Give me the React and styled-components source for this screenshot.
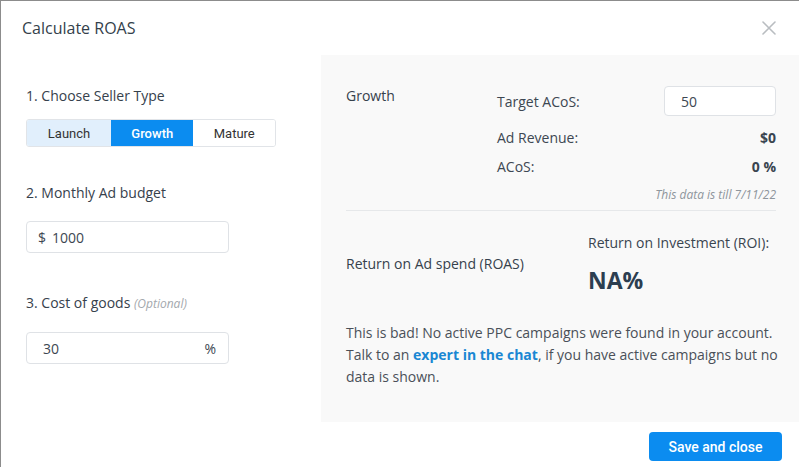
import React from 'react';
import styled, { createGlobalStyle } from 'styled-components';

const GlobalStyle = createGlobalStyle`
  html, body {
    margin: 0;
    padding: 0;
    background: #fff;
  }
  body {
    font-family: 'Open Sans', 'Noto Sans', sans-serif;
    color: #3a4550;
  }
  * { box-sizing: border-box; }
`;

const Frame = styled.div`
  width: 799px;
  height: 467px;
  border-top: 1px solid #8c8c8c;
  border-left: 1px solid #8c8c8c;
  display: flex;
  flex-direction: column;
  overflow: hidden;
`;

const Header = styled.div`
  height: 54px;
  display: flex;
  align-items: center;
  justify-content: space-between;
  padding: 0 22px 0 21px;

  h1 {
    margin: 0;
    font-size: 16px;
    font-weight: 500;
    color: #343f4b;
  }
`;

const CloseButton = styled.button`
  border: 0;
  background: none;
  padding: 0;
  width: 16px;
  height: 16px;
  display: flex;
  cursor: pointer;
`;

const Body = styled.div`
  height: 367px;
  display: grid;
  grid-template-columns: 320px 1fr;
`;

const LeftPane = styled.div`
  padding: 31px 0 0 25px;
  display: flex;
  flex-direction: column;
`;

const Label = styled.div`
  font-size: 14px;
  line-height: 20px;
  color: #36414c;
  margin-top: ${({ top }) => top || 0}px;

  em {
    font-size: 12px;
    color: #a3a8ad;
  }
`;

const Segments = styled.div`
  margin-top: 13px;
  display: flex;
  width: 250px;
  height: 28px;
  border: 1px solid #e1e4e8;
  border-radius: 3px;
  overflow: hidden;
`;

const Segment = styled.button`
  flex: ${({ w }) => w};
  border: 0;
  margin: 0;
  font-family: Roboto, 'Liberation Sans', sans-serif;
  font-size: 13px;
  font-weight: ${({ active }) => (active ? 500 : 400)};
  color: ${({ active }) => (active ? '#fff' : '#333')};
  background: ${({ active, tone }) =>
    active ? '#0b8cf0' : tone === 'light' ? '#e1effc' : '#fff'};
`;

const Field = styled.div`
  margin-top: 18px;
  width: 203px;
  height: 32px;
  border: 1px solid #dfe2e6;
  border-radius: 4px;
  background: #fff;
  display: flex;
  align-items: center;
  justify-content: space-between;
  padding: 0 ${({ pr }) => pr || 10}px 0 ${({ pl }) => pl || 11}px;
  font-size: 14px;
  color: #3d4752;
`;

const Prefix = styled.span`
  margin-right: 6px;
`;

const Value = styled.span`
  flex: 1;
`;

const RightPane = styled.div`
  background: #f9f9f9;
  padding: 31px 23px 0 25px;
  display: flex;
  flex-direction: column;
`;

const StatsBlock = styled.div`
  display: grid;
  grid-template-columns: 151px 1fr;
`;

const StatsList = styled.div`
  display: flex;
  flex-direction: column;
`;

const StatRow = styled.div`
  display: flex;
  align-items: center;
  justify-content: space-between;
  height: ${({ h }) => h || 20}px;
  margin-top: ${({ top }) => top || 0}px;
  font-size: 14px;
  color: #3d4752;

  b {
    font-weight: 700;
    color: #3a4550;
  }
`;

const SmallInput = styled.div`
  width: 112px;
  height: 30px;
  border: 1px solid #dfe2e6;
  border-radius: 4px;
  background: #fff;
  display: flex;
  align-items: center;
  padding-left: 16px;
  font-size: 14px;
`;

const Note = styled.div`
  text-align: right;
  font-size: 12px;
  line-height: 16px;
  font-style: italic;
  color: #8e959c;
  margin-top: 11px;
  padding-bottom: 7px;
  border-bottom: 1px solid #e6e8ea;
`;

const ResultBlock = styled.div`
  display: grid;
  grid-template-columns: 242px 1fr;
  align-items: center;
  padding-top: 22px;
`;

const ResultValue = styled.div`
  display: flex;
  flex-direction: column;

  span {
    font-size: 14px;
    line-height: 20px;
  }

  strong {
    font-size: 23px;
    font-weight: 700;
    color: #2c3e50;
    margin-top: 12px;
    line-height: 30px;
  }
`;

const Message = styled.p`
  margin: 27px -8px 0 0;
  font-size: 14px;
  line-height: 22px;
  color: #4a5058;

  a {
    color: #1a87d3;
    font-weight: 700;
    text-decoration: none;
  }
`;

const Footer = styled.div`
  flex: 1;
  display: flex;
  align-items: center;
  justify-content: flex-end;
  padding: 0 17px 0 0;
`;

const PrimaryButton = styled.button`
  width: 133px;
  height: 29px;
  border: 0;
  border-radius: 4px;
  background: #0b8cf0;
  color: #fff;
  font-family: Roboto, 'Liberation Sans', sans-serif;
  font-size: 14px;
  font-weight: 500;
  margin-top: 4px;
`;

const CloseIcon = () => (
  <svg width="16" height="16" viewBox="0 0 16 16">
    <path d="M2 2 L14 14 M14 2 L2 14" stroke="#b9bdc1" strokeWidth="1.6" strokeLinecap="round" />
  </svg>
);

export default function App() {
  return (
    <>
      <GlobalStyle />
      <Frame>
        <Header>
          <h1>Calculate ROAS</h1>
          <CloseButton aria-label="Close">
            <CloseIcon />
          </CloseButton>
        </Header>
        <Body>
          <LeftPane>
            <Label>1. Choose Seller Type</Label>
            <Segments>
              <Segment w={85} tone="light">Launch</Segment>
              <Segment w={83} active>Growth</Segment>
              <Segment w={82}>Mature</Segment>
            </Segments>
            <Label top={36}>2. Monthly Ad budget</Label>
            <Field>
              <Prefix>$</Prefix>
              <Value>1000</Value>
            </Field>
            <Label top={40}>
              3. Cost of goods <em>(Optional)</em>
            </Label>
            <Field pl={16} pr={12}>
              <span>30</span>
              <span>%</span>
            </Field>
          </LeftPane>
          <RightPane>
            <StatsBlock>
              <Label>Growth</Label>
              <StatsList>
                <StatRow h={30}>
                  <span>Target ACoS:</span>
                  <SmallInput>50</SmallInput>
                </StatRow>
                <StatRow top={11}>
                  <span>Ad Revenue:</span>
                  <b>$0</b>
                </StatRow>
                <StatRow top={9}>
                  <span>ACoS:</span>
                  <b>0 %</b>
                </StatRow>
              </StatsList>
            </StatsBlock>
            <Note>This data is till 7/11/22</Note>
            <ResultBlock>
              <Label>Return on Ad spend (ROAS)</Label>
              <ResultValue>
                <span>Return on Investment (ROI):</span>
                <strong>NA%</strong>
              </ResultValue>
            </ResultBlock>
            <Message>
              This is bad! No active PPC campaigns were found in your account. Talk to an{' '}
              <a href="#chat">expert in the chat</a>, if you have active campaigns but no data is
              shown.
            </Message>
          </RightPane>
        </Body>
        <Footer>
          <PrimaryButton>Save and close</PrimaryButton>
        </Footer>
      </Frame>
    </>
  );
}
